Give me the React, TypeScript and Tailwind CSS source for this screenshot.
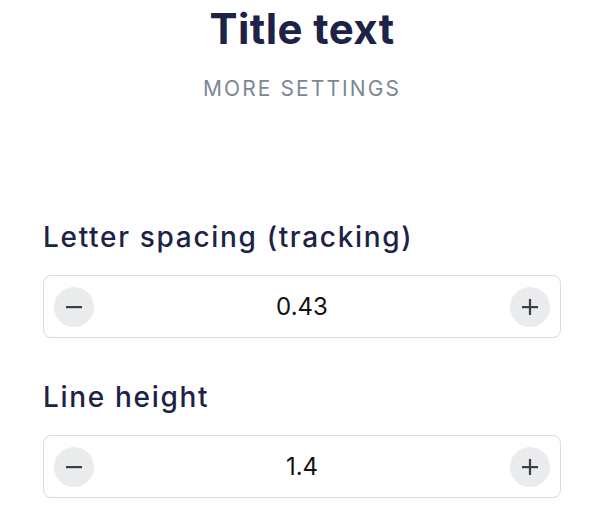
import React, { useState } from "react";

type StepperProps = {
  label: string;
  value: number;
  step: number;
  decimals: number;
  onChange: (v: number) => void;
};

function Stepper({ label, value, step, decimals, onChange }: StepperProps) {
  return (
    <div className="flex flex-col">
      <div className="text-[28px] leading-[32px] font-medium tracking-[0.06em] text-[#1d2347] font-['Inter',sans-serif]">
        {label}
      </div>
      <div className="mt-[22px] h-[63px] flex items-center justify-between px-[10px] rounded-[8px] border border-[#dcdcdc] bg-white">
        <button
          type="button"
          aria-label="Decrease"
          onClick={() => onChange(+(value - step).toFixed(decimals))}
          className="w-10 h-10 rounded-full bg-[#eaebec] flex items-center justify-center"
        >
          <svg width="16" height="16" viewBox="0 0 16 16">
            <rect x="0" y="7" width="16" height="2.2" fill="#3d3f47" />
          </svg>
        </button>
        <div className="text-[24px] text-[#111] font-['Inter','Liberation_Sans',sans-serif]">
          {value.toString()}
        </div>
        <button
          type="button"
          aria-label="Increase"
          onClick={() => onChange(+(value + step).toFixed(decimals))}
          className="w-10 h-10 rounded-full bg-[#eaebec] flex items-center justify-center"
        >
          <svg width="16" height="16" viewBox="0 0 16 16">
            <rect x="0" y="7" width="16" height="2.2" fill="#3d3f47" />
            <rect x="6.9" y="0" width="2.2" height="16" fill="#3d3f47" />
          </svg>
        </button>
      </div>
    </div>
  );
}

export default function App() {
  const [tracking, setTracking] = useState(0.43);
  const [lineHeight, setLineHeight] = useState(1.4);

  return (
    <div className="w-[610px] h-[518px] bg-white overflow-hidden font-['Inter',sans-serif]">
      <div className="pt-[5px] pr-[6px] flex flex-col items-center">
        <h1 className="text-[42px] leading-[48px] font-bold tracking-[0.01em] text-[#1d2347]">Title text</h1>
        <div className="mt-[24px] text-[21px] leading-[24px] tracking-[0.1em] text-[#7b8795]">
          MORE SETTINGS
        </div>
      </div>
      <div className="mt-[120px] pl-[43px] pr-[49px] flex flex-col gap-[43px]">
        <Stepper
          label="Letter spacing (tracking)"
          value={tracking}
          step={0.01}
          decimals={2}
          onChange={setTracking}
        />
        <Stepper
          label="Line height"
          value={lineHeight}
          step={0.1}
          decimals={1}
          onChange={setLineHeight}
        />
      </div>
    </div>
  );
}
